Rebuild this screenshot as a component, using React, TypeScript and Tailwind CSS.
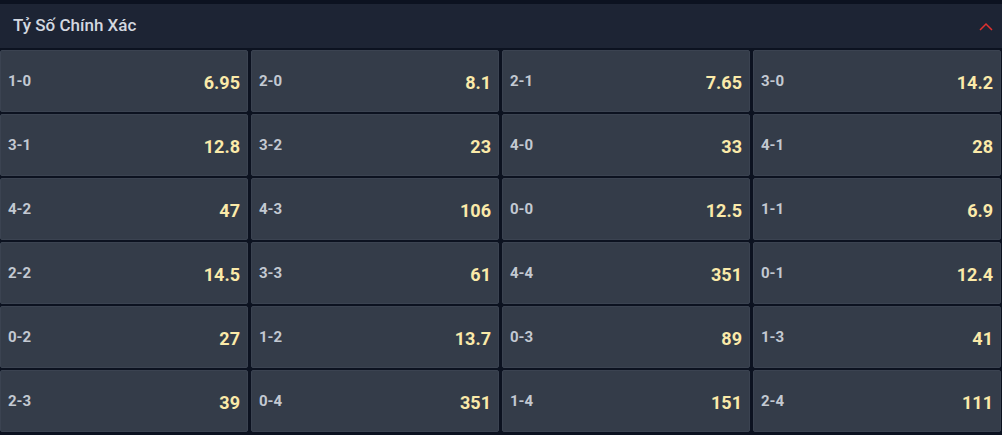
import React from "react";

const data: [string, string][] = [
  ["1-0", "6.95"], ["2-0", "8.1"], ["2-1", "7.65"], ["3-0", "14.2"],
  ["3-1", "12.8"], ["3-2", "23"], ["4-0", "33"], ["4-1", "28"],
  ["4-2", "47"], ["4-3", "106"], ["0-0", "12.5"], ["1-1", "6.9"],
  ["2-2", "14.5"], ["3-3", "61"], ["4-4", "351"], ["0-1", "12.4"],
  ["0-2", "27"], ["1-2", "13.7"], ["0-3", "89"], ["1-3", "41"],
  ["2-3", "39"], ["0-4", "351"], ["1-4", "151"], ["2-4", "111"],
];

export default function App() {
  return (
    <div
      className="w-[1002px] h-[435px] overflow-hidden bg-[#0c1220] pt-[4px]"
      style={{ fontFamily: "Roboto, 'Liberation Sans', sans-serif" }}
    >
      <div className="h-[44px] bg-[#1d2434] flex items-center justify-between pl-[13px] pr-[9px]">
        <span className="text-[17px] font-medium text-[#d3d8e0]">Tỷ Số Chính Xác</span>
        <svg width="14" height="9" viewBox="0 0 14 9" className="mt-[1px]">
          <path d="M1 8 L7 2 L13 8" fill="none" stroke="#e0312f" strokeWidth="1.5" />
        </svg>
      </div>
      <div className="grid grid-cols-4 gap-x-[3px] gap-y-[2px] pt-[2px] pr-[1px]">
        {data.map(([label, odds]) => (
          <div
            key={label}
            className="h-[62px] bg-[#343c49] border border-[#3b4351] rounded-[2px] flex items-center justify-between pl-[7px] pr-[7px] pt-[2px]"
          >
            <span className="text-[15px] font-bold text-[#c3c9d2] -mt-[1px]">{label}</span>
            <span className="text-[18px] font-bold text-[#fbeaa9]">{odds}</span>
          </div>
        ))}
      </div>
    </div>
  );
}
